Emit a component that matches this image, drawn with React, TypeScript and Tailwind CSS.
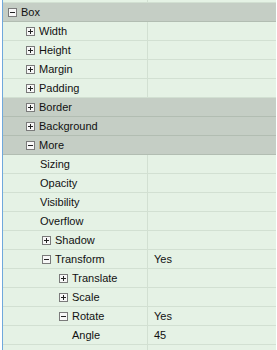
type Row = {
  label: string;
  pad: string;
  icon?: 'plus' | 'minus';
  head?: boolean;
  value?: string;
};

const rows: Row[] = [
  { label: 'Box', pad: 'pl-[5px]', icon: 'minus', head: true },
  { label: 'Width', pad: 'pl-[23px]', icon: 'plus' },
  { label: 'Height', pad: 'pl-[23px]', icon: 'plus' },
  { label: 'Margin', pad: 'pl-[23px]', icon: 'plus' },
  { label: 'Padding', pad: 'pl-[23px]', icon: 'plus' },
  { label: 'Border', pad: 'pl-[23px]', icon: 'plus', head: true },
  { label: 'Background', pad: 'pl-[23px]', icon: 'plus', head: true },
  { label: 'More', pad: 'pl-[23px]', icon: 'minus', head: true },
  { label: 'Sizing', pad: 'pl-[37px]' },
  { label: 'Opacity', pad: 'pl-[37px]' },
  { label: 'Visibility', pad: 'pl-[37px]' },
  { label: 'Overflow', pad: 'pl-[37px]' },
  { label: 'Shadow', pad: 'pl-[39px]', icon: 'plus' },
  { label: 'Transform', pad: 'pl-[39px]', icon: 'minus', value: 'Yes' },
  { label: 'Translate', pad: 'pl-[56px]', icon: 'plus' },
  { label: 'Scale', pad: 'pl-[56px]', icon: 'plus' },
  { label: 'Rotate', pad: 'pl-[56px]', icon: 'minus', value: 'Yes' },
  { label: 'Angle', pad: 'pl-[69px]', value: '45' },
];

function Toggle({ kind }: { kind: 'plus' | 'minus' }) {
  return (
    <svg width="9" height="9" viewBox="0 0 9 9" className="shrink-0">
      <rect x="0.5" y="0.5" width="8" height="8" fill="#f7f7f7" stroke="#7a7a7a" />
      <line x1="2" y1="4.5" x2="7" y2="4.5" stroke="#222" />
      {kind === 'plus' && <line x1="4.5" y1="2" x2="4.5" y2="7" stroke="#222" />}
    </svg>
  );
}

export default function App() {
  return (
    <div className="h-[350px] w-[277px] overflow-hidden bg-white font-['Liberation_Sans',Arial,sans-serif] text-[11px] text-[#111]">
      <div className="ml-[2px] h-full w-[274px] border-l border-[#6fa8dc] bg-[#e5f2e5]">
        {/* tail of the row above */}
        <div className="flex h-[3px] border-b border-[#d2e0d2]">
          <div className="w-[145px] border-r border-[#d2e0d2]" />
        </div>

        {rows.map((r) =>
          r.head ? (
            <div
              key={r.label}
              className={`flex h-[19px] items-center gap-[4px] border-b border-[#b2bdb2] bg-[#c5cec5] ${r.pad}`}
            >
              {r.icon && <Toggle kind={r.icon} />}
              <span>{r.label}</span>
            </div>
          ) : (
            <div key={r.label} className="flex h-[19px] border-b border-[#d2e0d2]">
              <div className={`flex w-[145px] items-center gap-[4px] border-r border-[#d2e0d2] ${r.pad}`}>
                {r.icon && <Toggle kind={r.icon} />}
                <span>{r.label}</span>
              </div>
              <div className="flex flex-1 items-center pl-[6px]">{r.value}</div>
            </div>
          )
        )}

        <div className="flex h-[19px]">
          <div className="w-[145px] border-r border-[#d2e0d2]" />
        </div>
      </div>
    </div>
  );
}
